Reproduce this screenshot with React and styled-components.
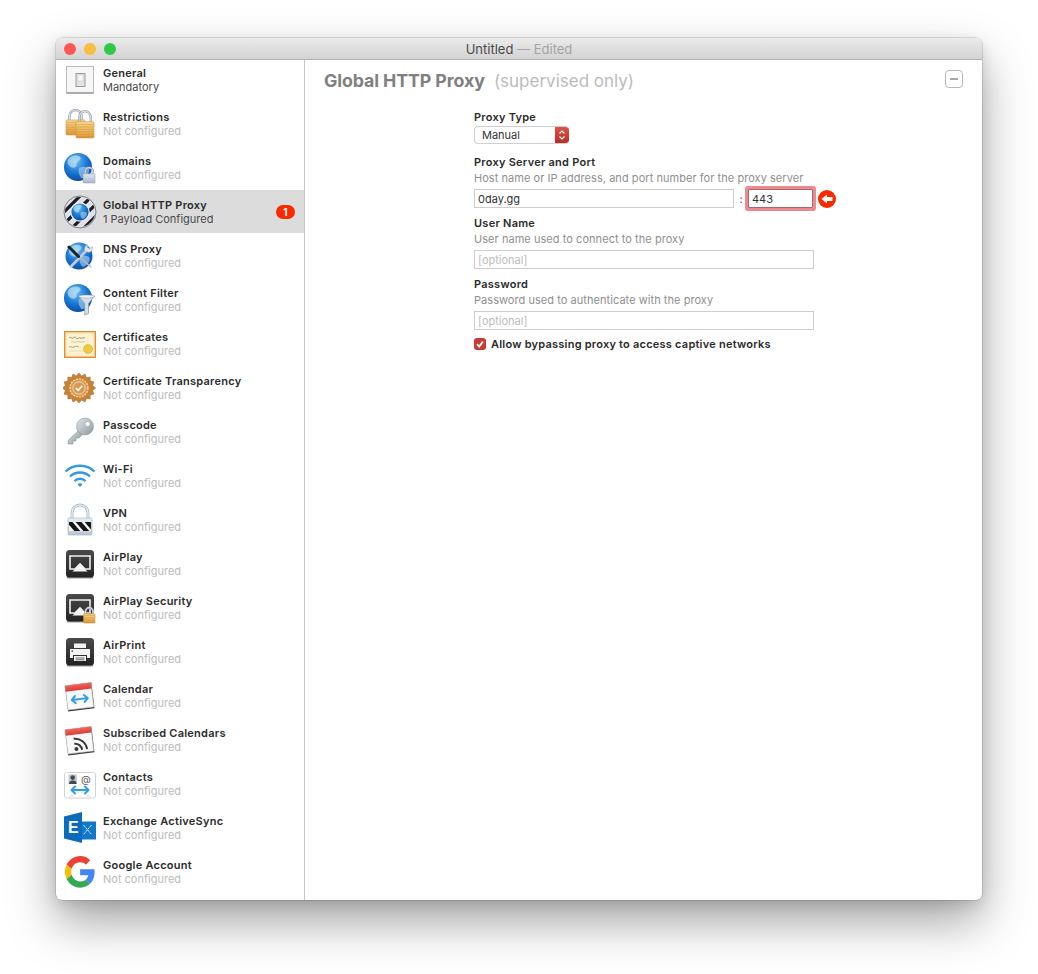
import React from "react";
import styled, { createGlobalStyle } from "styled-components";

const GlobalStyle = createGlobalStyle`
  html, body {
    margin: 0;
    background: #fff;
    font-family: Inter, "Liberation Sans", sans-serif;
  }
`;

const Page = styled.div`
  width: 1038px;
  height: 974px;
  padding: 38px 56px 74px;
  box-sizing: border-box;
  overflow: hidden;
`;

const Window = styled.div`
  height: 862px;
  display: flex;
  flex-direction: column;
  border-radius: 6px;
  background: #fff;
  overflow: hidden;
  box-shadow: 0 0 0 0.5px rgba(0, 0, 0, 0.22), 0 22px 48px rgba(0, 0, 0, 0.36),
    0 4px 14px rgba(0, 0, 0, 0.12);
`;

const TitleBar = styled.div`
  flex: none;
  height: 22px;
  box-sizing: border-box;
  display: flex;
  align-items: center;
  position: relative;
  background: linear-gradient(#ebebeb, #d3d3d3);
  border-bottom: 1px solid #b1b1b1;
`;

const Lights = styled.div`
  display: flex;
  gap: 8px;
  padding-left: 8px;
`;

const Light = styled.span`
  width: 12px;
  height: 12px;
  border-radius: 50%;
  background: ${p => p.color};
`;

const TitleText = styled.div`
  position: absolute;
  left: 0;
  right: 0;
  text-align: center;
  font-size: 13px;
  color: #4b4b4b;

  span {
    color: #a3a3a3;
  }
`;

const Body = styled.div`
  flex: 1;
  display: flex;
  min-height: 0;
`;

const Sidebar = styled.div`
  flex: none;
  width: 248px;
  border-right: 1px solid #c6c6c6;
  overflow: hidden;
`;

const List = styled.div`
  margin-top: -2px;
`;

const Row = styled.div`
  height: 44px;
  box-sizing: border-box;
  display: flex;
  align-items: center;
  gap: 6px;
  padding: 1px 9px 0 7px;
  border-bottom: 1px solid transparent;
  background-clip: padding-box;
  background-color: ${p => (p.selected ? "#dcdcdc" : "transparent")};
`;

const IconBox = styled.svg`
  flex: none;
  width: 34px;
  height: 34px;
  display: block;
`;

const RowText = styled.div`
  flex: 1;
  min-width: 0;
  font-size: 11px;
  line-height: 14px;
`;

const RowName = styled.div`
  font-weight: 600;
  letter-spacing: 0.25px;
  color: #2b2b2b;
`;

const RowSub = styled.div`
  color: ${p => (p.active ? "#4a4a4a" : "#bcbcbc")};
`;

const Badge = styled.div`
  width: 19px;
  height: 14px;
  border-radius: 7px;
  background: #f72a00;
  color: #fff;
  font-size: 10px;
  font-weight: 700;
  line-height: 14px;
  text-align: center;
`;

const Main = styled.div`
  flex: 1;
  min-width: 0;
`;

const Header = styled.div`
  height: 40px;
  display: flex;
  align-items: center;
  justify-content: space-between;
  padding: 0 19px;
`;

const Heading = styled.div`
  font-size: 17.8px;
  font-weight: 700;
  letter-spacing: -0.1px;
  color: #808080;

  span {
    margin-left: 5px;
    font-size: 17px;
    font-weight: 400;
    letter-spacing: 0;
    color: #bbb;
  }
`;

const Collapse = styled.div`
  width: 16px;
  height: 16px;
  margin-top: -3px;
  display: flex;
  align-items: center;
  justify-content: center;
  border: 1px solid #b8b8b8;
  border-radius: 4px;

  &::before {
    content: "";
    width: 8px;
    height: 2px;
    background: #a8a8a8;
  }
`;

const Form = styled.div`
  display: flex;
  flex-direction: column;
  width: 340px;
  margin-left: 169px;
  padding-top: 10px;
`;

const Label = styled.div`
  font-size: 11px;
  line-height: 14px;
  font-weight: 600;
  letter-spacing: 0.25px;
  color: #2b2b2b;
  margin-top: ${p => p.gap || 0}px;
`;

const Help = styled.div`
  font-size: 11px;
  line-height: 14px;
  letter-spacing: 0.05px;
  color: #8f8f8f;
  margin-top: 2px;
  white-space: nowrap;
`;

const SelectBox = styled.div`
  width: 95px;
  height: 18px;
  margin-top: 2px;
  box-sizing: border-box;
  display: flex;
  justify-content: space-between;
  border: 1px solid #cfcfcf;
  border-right: 0;
  border-radius: 4px;
  overflow: hidden;
  font-size: 11px;
  line-height: 16px;
  color: #333;
  padding-left: 7px;
`;

const SelectArrows = styled.div`
  width: 14px;
  margin: -1px 0;
  display: flex;
  align-items: center;
  justify-content: center;
  background: linear-gradient(#e0554c, #b62a22);
`;

const PortRow = styled.div`
  display: flex;
  align-items: center;
  margin-top: 4px;
  white-space: nowrap;
`;

const Colon = styled.div`
  flex: none;
  width: 14px;
  text-align: center;
  font-size: 11px;
  color: #555;
`;

const Input = styled.input`
  display: block;
  flex: none;
  box-sizing: border-box;
  width: ${p => p.$width || "340px"};
  height: 19px;
  margin: ${p => p.$top || 0}px 0 0;
  padding: 0 3px;
  border: 1px solid ${p => (p.$invalid ? "#a9666b" : "#cdcdcd")};
  border-radius: ${p => (p.$invalid ? "1px" : "0")};
  outline: none;
  background: #fff;
  font-family: inherit;
  font-size: 11px;
  color: #333;
  box-shadow: ${p => (p.$invalid ? "0 0 0 3px #ea8b90" : "none")};

  &::placeholder {
    color: #bdbdbd;
    opacity: 1;
  }
`;

const ErrorMark = styled.svg`
  flex: none;
  width: 18px;
  height: 18px;
  margin-left: 5px;
`;

const CheckRow = styled.div`
  display: flex;
  align-items: center;
  gap: 5px;
  margin-top: 7px;
  font-size: 11px;
  line-height: 14px;
  font-weight: 600;
  letter-spacing: 0.23px;
  color: #2b2b2b;
`;

const CheckBox = styled.div`
  width: 12px;
  height: 12px;
  border-radius: 3px;
  background: #c93b36;
  display: flex;
  align-items: center;
  justify-content: center;
`;

// shared bits for the payload icons
const Globe = ({ id, cx, cy, r }) => (
  <g>
    <defs>
      <radialGradient id={id} cx="0.42" cy="0.3" r="0.8">
        <stop offset="0" stopColor="#6fc2f5" />
        <stop offset="0.5" stopColor="#1a78d6" />
        <stop offset="1" stopColor="#073f96" />
      </radialGradient>
    </defs>
    <circle cx={cx} cy={cy} r={r} fill={`url(#${id})`} />
    <path
      d={`M${cx - r * 0.55} ${cy - r * 0.72}c${r * 0.4} ${-r * 0.2} ${r * 0.7} ${-r * 0.1} ${r * 0.75} ${r * 0.1}c${-r * 0.1} ${r * 0.25} ${-r * 0.3} ${r * 0.2} ${-r * 0.3} ${r * 0.45}c${r * 0.05} ${r * 0.25} ${-r * 0.35} ${r * 0.3} ${-r * 0.5} ${r * 0.1}c${-r * 0.2} ${-r * 0.2} ${-r * 0.2} ${-r * 0.45} ${r * 0.05} ${-r * 0.65}z`}
      fill="#d5ecf7"
      opacity="0.6"
    />
    <path
      d={`M${cx + r * 0.1} ${cy + r * 0.05}c${r * 0.35} ${-r * 0.15} ${r * 0.7} ${-r * 0.05} ${r * 0.7} ${r * 0.15}c0 ${r * 0.3} ${-r * 0.3} ${r * 0.6} ${-r * 0.55} ${r * 0.6}c${-r * 0.15} ${-r * 0.2} ${-r * 0.3} ${-r * 0.5} ${-r * 0.15} ${-r * 0.75}z`}
      fill="#bfe2f2"
      opacity="0.55"
    />
  </g>
);

const Padlock = ({ id, x, y, w, h, gold }) => {
  const arch = `M${x + w * 0.18} ${y + h * 0.45}V${y + h * 0.28}a${w * 0.32} ${h * 0.24} 0 0 1 ${w * 0.64} 0V${y + h * 0.45}`;
  const lines = [];
  if (gold) {
    for (let ly = y + h * 0.52; ly < y + h; ly += 2.4) lines.push(ly);
  }
  return (
    <g>
      <defs>
        <linearGradient id={id} x1="0" y1="0" x2="0" y2="1">
          <stop offset="0" stopColor={gold ? "#f8d98c" : "#dfe6f0"} />
          <stop offset="1" stopColor={gold ? "#dd9a3a" : "#a9b7cc"} />
        </linearGradient>
      </defs>
      <path d={arch} fill="none" stroke="#8a93a3" strokeWidth="2.2" />
      <path d={arch} fill="none" stroke="#dfe4ec" strokeWidth="1.1" />
      <rect
        x={x}
        y={y + h * 0.42}
        width={w}
        height={h * 0.58}
        rx="1"
        fill={`url(#${id})`}
        stroke={gold ? "#c58a34" : "#8897ad"}
        strokeWidth="0.5"
      />
      {lines.map(ly => (
        <path key={ly} d={`M${x + 0.5} ${ly}H${x + w - 0.5}`} stroke="#d08f36" strokeWidth="0.5" />
      ))}
    </g>
  );
};

const DarkTile = ({ id }) => (
  <g>
    <defs>
      <linearGradient id={id} x1="0" y1="0" x2="0" y2="1">
        <stop offset="0" stopColor="#4a4a4a" />
        <stop offset="1" stopColor="#222" />
      </linearGradient>
    </defs>
    <rect x="3.5" y="30" width="27" height="1.4" rx="0.7" fill="#9a9a9a" />
    <rect x="3" y="3" width="28" height="27.6" rx="3.5" fill={`url(#${id})`} />
  </g>
);

const AirPlayGlyph = () => (
  <g>
    <path d="M7 9h20v13h-5l-5-5-5 5H7z" fill="none" stroke="#f2f2f2" strokeWidth="1.6" />
    <path d="M17 17l7.5 7.5h-15z" fill="#f2f2f2" />
  </g>
);

const CalendarBase = ({ id, children }) => (
  <g transform="rotate(-7 17 18)">
    <defs>
      <linearGradient id={id} x1="0" y1="0" x2="0" y2="1">
        <stop offset="0" stopColor="#f3655f" />
        <stop offset="1" stopColor="#d93c36" />
      </linearGradient>
    </defs>
    <rect x="3.5" y="5" width="26.5" height="26" fill="#3b3b3b" />
    <rect x="3.5" y="5" width="26" height="24.5" fill="#f8f8f8" stroke="#b5b5b5" strokeWidth="0.5" />
    <rect x="3.5" y="5" width="26" height="6" fill={`url(#${id})`} />
    {children}
  </g>
);

const BlueArrows = ({ x, y, w }) => (
  <g fill="none" stroke="#2d9bef" strokeWidth="2" strokeLinecap="round" strokeLinejoin="round">
    <path d={`M${x + 1} ${y}H${x + w - 1}`} />
    <path d={`M${x + 4} ${y - 3.5}L${x + 0.5} ${y}L${x + 4} ${y + 3.5}`} />
    <path d={`M${x + w - 4} ${y - 3.5}L${x + w - 0.5} ${y}L${x + w - 4} ${y + 3.5}`} />
  </g>
);

const icons = {
  general: (
    <g>
      <rect x="3.5" y="3.5" width="27" height="26.5" fill="#f7f7f7" stroke="#bdbdbd" />
      <path d="M3.5 30h27" stroke="#7d7d7d" />
      <rect x="13" y="10.5" width="9" height="13" fill="#e4e4e4" stroke="#9b9b9b" />
      <rect x="15" y="12" width="5" height="6" fill="#fafafa" stroke="#c4c4c4" strokeWidth="0.5" />
    </g>
  ),
  restrictions: (
    <g>
      <Padlock id="rl1" x={3} y={2} w={19} h={26} gold />
      <Padlock id="rl2" x={13} y={3} w={18} h={28} gold />
    </g>
  ),
  domains: (
    <g>
      <Globe id="g1" cx={15} cy={16} r={14} />
      <Padlock id="dl" x={20} y={16} w={12} h={16} />
    </g>
  ),
  proxy: (
    <g>
      <defs>
        <clipPath id="ringclip">
          <circle cx="17" cy="17" r="15" />
        </clipPath>
      </defs>
      <circle cx="17" cy="17" r="16" fill="#dfe3e8" stroke="#5b6472" strokeWidth="0.8" />
      <g clipPath="url(#ringclip)" stroke="#1b1b1f" strokeWidth="3.2">
        <path d="M-4 10L10 -4M-2 20L20 -2M0 30L30 0M6 36L36 6M16 38L38 16M26 38L38 26" />
      </g>
      <circle cx="17" cy="17" r="9.8" fill="#e8eef5" />
      <Globe id="g2" cx={17} cy={17} r={8.6} />
    </g>
  ),
  dns: (
    <g>
      <Globe id="g3" cx={16} cy={17} r={13.5} />
      <path d="M8 27.5L24 11" stroke="#c9ced6" strokeWidth="2.6" strokeLinecap="round" />
      <path d="M24.5 5.5a5 5 0 0 0-2.5 7l4 1a5 5 0 0 0 3.5-6l-3 2-2-1z" fill="#e2e5ea" stroke="#8b93a0" strokeWidth="0.4" />
      <path d="M15 17l13 11" stroke="#b8bcc4" strokeWidth="1.6" strokeLinecap="round" />
      <path d="M6 8l9.5 9.5" stroke="#222226" strokeWidth="3" strokeLinecap="round" />
    </g>
  ),
  filter: (
    <g>
      <Globe id="g4" cx={15} cy={15} r={14} />
      <path d="M15.5 13h16l-6 7.5v10l-3.8 1.5V20.5z" fill="#d7dee8" stroke="#8494aa" strokeWidth="0.7" strokeLinejoin="round" />
      <ellipse cx="23.5" cy="13.5" rx="7.5" ry="1.6" fill="#f2f5f8" stroke="#8494aa" strokeWidth="0.5" />
    </g>
  ),
  certificates: (
    <g>
      <rect x="1.7" y="4.7" width="30.6" height="25.6" fill="#fdf3d3" stroke="#e08f2e" strokeWidth="1.4" />
      <rect x="3" y="6" width="28" height="23" fill="none" stroke="#f3c67d" strokeWidth="0.5" />
      <path d="M6 11c2-2 2 1 4 0s2-2 3 0 3-1 4 0 3-1 5 0" fill="none" stroke="#85806b" strokeWidth="0.8" />
      <path d="M8 15c2-1 3 1 5 0s3 0 5 0 2-1 4 0" fill="none" stroke="#aaa58e" strokeWidth="0.6" />
      <path d="M6 20c2-1 3 1 5 0s3-1 5 0" fill="none" stroke="#85806b" strokeWidth="0.7" />
      <path d="M6 24h14" stroke="#c8c2a8" strokeWidth="0.5" />
      <circle cx="25" cy="22" r="4.5" fill="#edc93c" stroke="#cda11f" strokeWidth="0.8" strokeDasharray="1.2 0.8" />
    </g>
  ),
  transparency: (
    <g>
      <path
        d="M16 2l2.6 2.9 3.4-1.9 1.3 3.6 3.9-.5 0 3.9 3.8.9-1.4 3.6 3 2.5-3 2.5 1.4 3.6-3.8.9 0 3.9-3.9-.5-1.3 3.6-3.4-1.9L16 32l-2.6-2.9-3.4 1.9-1.3-3.6-3.9.5 0-3.9-3.8-.9 1.4-3.6-3-2.5 3-2.5-1.4-3.6 3.8-.9 0-3.9 3.9.5L10 3l3.4 1.9z"
        fill="#c98136"
        stroke="#a7631f"
        strokeWidth="0.5"
      />
      <circle cx="16" cy="17" r="9" fill="#d89a52" stroke="#f6e6cd" strokeWidth="1.2" strokeDasharray="2 1" />
      <circle cx="16" cy="17" r="6.2" fill="none" stroke="#f6e6cd" strokeWidth="0.8" />
      <path d="M12.8 17l2.4 2.4 4-4.6" fill="none" stroke="#fff" strokeWidth="1.5" />
    </g>
  ),
  passcode: (
    <g>
      <defs>
        <linearGradient id="keyg" x1="0" y1="0" x2="1" y2="1">
          <stop offset="0" stopColor="#e0e6e8" />
          <stop offset="1" stopColor="#8d989c" />
        </linearGradient>
      </defs>
      <path d="M17 14L5 25.5V29h5v-3h3v-3h3l3-3z" fill="url(#keyg)" stroke="#7f898d" strokeWidth="0.5" />
      <circle cx="22" cy="11.5" r="8.5" fill="url(#keyg)" stroke="#7f898d" strokeWidth="0.5" />
      <circle cx="24.5" cy="9" r="2.5" fill="#fff" stroke="#8d989c" strokeWidth="0.5" />
    </g>
  ),
  wifi: (
    <g fill="none" stroke="#2f98e8" strokeWidth="2.4">
      <path d="M2.5 12.5a21 21 0 0 1 29 0" />
      <path d="M7 17.5a14.5 14.5 0 0 1 20 0" />
      <path d="M11.5 22a8 8 0 0 1 11 0" />
      <path d="M14.5 25.5L17 28l2.5-2.5a3.5 3.5 0 0 0-5 0z" fill="#2f98e8" stroke="none" />
    </g>
  ),
  vpn: (
    <g>
      <defs>
        <clipPath id="vpnclip">
          <rect x="6" y="19" width="22" height="9" />
        </clipPath>
        <linearGradient id="vpng" x1="0" y1="0" x2="0" y2="1">
          <stop offset="0" stopColor="#e9eef4" />
          <stop offset="1" stopColor="#bac6d6" />
        </linearGradient>
      </defs>
      <path d="M9 16V10a8 8 0 0 1 16 0v6" fill="none" stroke="#a8b6c8" strokeWidth="2.8" />
      <path d="M9 16V10a8 8 0 0 1 16 0v6" fill="none" stroke="#e3e9f1" strokeWidth="1.4" />
      <rect x="5" y="15" width="24" height="17" rx="1.5" fill="url(#vpng)" stroke="#9fb0c6" strokeWidth="0.6" />
      <rect x="6" y="19" width="22" height="9" fill="#f5f5f5" />
      <g clipPath="url(#vpnclip)" stroke="#161616" strokeWidth="4.4">
        <path d="M4 16l12 14M13 16l12 14M22 16l12 14" />
      </g>
    </g>
  ),
  airplay: (
    <g>
      <DarkTile id="t1" />
      <AirPlayGlyph />
    </g>
  ),
  airplaysec: (
    <g>
      <DarkTile id="t2" />
      <AirPlayGlyph />
      <Padlock id="apl" x={20.5} y={16} w={11.5} h={16} gold />
    </g>
  ),
  airprint: (
    <g>
      <DarkTile id="t3" />
      <path d="M11 13V8.5h12V13z" fill="#f2f2f2" />
      <path d="M7 14h20v9h-3v-3H10v3H7z" fill="#f2f2f2" />
      <rect x="8.5" y="15.5" width="1.6" height="1.2" fill="#333" />
      <path d="M11 21h12v5H11z" fill="#f2f2f2" />
      <path d="M12.5 23h9M12.5 24.8h9" stroke="#333" strokeWidth="0.7" />
    </g>
  ),
  calendar: (
    <CalendarBase id="c1">
      <BlueArrows x={8} y={20} w={17} />
    </CalendarBase>
  ),
  subscribed: (
    <CalendarBase id="c2">
      <g fill="none" stroke="#3a3a3a" strokeWidth="2">
        <path d="M11 15a12 12 0 0 1 12 12" />
        <path d="M11 20a7 7 0 0 1 7 7" />
      </g>
      <circle cx="12.5" cy="25.5" r="2" fill="#3a3a3a" />
    </CalendarBase>
  ),
  contacts: (
    <g>
      <rect x="1.5" y="5.5" width="31" height="25.5" rx="2" fill="#fff" stroke="#cfd3d6" />
      <rect x="5.5" y="7.5" width="8.5" height="9.5" fill="#c3cbd0" />
      <circle cx="9.7" cy="10.6" r="2.3" fill="#43494d" />
      <path d="M6 17c0-2.8 1.7-3.4 3.7-3.4s3.8.6 3.8 3.4z" fill="#43494d" />
      <text x="18" y="16" fontSize="10" fill="#555" fontFamily="Inter, sans-serif">@</text>
      <BlueArrows x={8} y={23} w={18} />
      <path d="M6 30l2-1.5M10 30L8 28.5M24 30l2-1.5M28 30l-2-1.5" stroke="#c9c9c9" strokeWidth="0.6" />
    </g>
  ),
  exchange: (
    <g>
      <path d="M15 10.5h18v18H15z" fill="#1478c8" />
      <path d="M20.5 14l8 9.5M28.5 14l-8 9.5" stroke="#dcecf8" strokeWidth="1" strokeDasharray="2.4 0.8" />
      <path d="M1 5.5L19 1v31L1 27.5z" fill="#0a6cbb" />
      <text x="5" y="21.5" fontSize="16" fontWeight="700" fill="#fff" fontFamily="'Liberation Sans', sans-serif">E</text>
    </g>
  ),
  google: (
    <g transform="translate(2 1) scale(0.63 0.66)">
      <path fill="#EA4335" d="M24 9.5c3.54 0 6.71 1.22 9.21 3.6l6.85-6.85C35.9 2.38 30.47 0 24 0 14.62 0 6.51 5.38 2.56 13.22l7.98 6.19C12.43 13.72 17.74 9.5 24 9.5z" />
      <path fill="#4285F4" d="M46.98 24.55c0-1.57-.15-3.09-.38-4.55H24v9.02h12.94c-.58 2.96-2.26 5.48-4.78 7.18l7.73 6c4.51-4.18 7.09-10.36 7.09-17.65z" />
      <path fill="#FBBC05" d="M10.53 28.59c-.48-1.45-.76-2.99-.76-4.59s.27-3.14.76-4.59l-7.98-6.19C.92 16.46 0 20.12 0 24c0 3.88.92 7.54 2.56 10.78l7.97-6.19z" />
      <path fill="#34A853" d="M24 48c6.48 0 11.93-2.13 15.89-5.81l-7.73-6c-2.15 1.45-4.92 2.3-8.16 2.3-6.26 0-11.57-4.22-13.47-9.91l-7.98 6.19C6.51 42.62 14.62 48 24 48z" />
    </g>
  )
};

const payloads = [
  { name: "General", icon: "general", sub: "Mandatory" },
  { name: "Restrictions", icon: "restrictions" },
  { name: "Domains", icon: "domains" },
  { name: "Global HTTP Proxy", icon: "proxy", sub: "1 Payload Configured", badge: 1, selected: true },
  { name: "DNS Proxy", icon: "dns" },
  { name: "Content Filter", icon: "filter" },
  { name: "Certificates", icon: "certificates" },
  { name: "Certificate Transparency", icon: "transparency" },
  { name: "Passcode", icon: "passcode" },
  { name: "Wi-Fi", icon: "wifi" },
  { name: "VPN", icon: "vpn" },
  { name: "AirPlay", icon: "airplay" },
  { name: "AirPlay Security", icon: "airplaysec" },
  { name: "AirPrint", icon: "airprint" },
  { name: "Calendar", icon: "calendar" },
  { name: "Subscribed Calendars", icon: "subscribed" },
  { name: "Contacts", icon: "contacts" },
  { name: "Exchange ActiveSync", icon: "exchange" },
  { name: "Google Account", icon: "google" }
];

export default function App() {
  return (
    <Page>
      <GlobalStyle />
      <Window>
        <TitleBar>
          <Lights>
            <Light color="#fc5753" />
            <Light color="#fdbc40" />
            <Light color="#33c748" />
          </Lights>
          <TitleText>
            Untitled <span>— Edited</span>
          </TitleText>
        </TitleBar>
        <Body>
          <Sidebar>
            <List>
              {payloads.map(p => (
                <Row key={p.name} selected={p.selected}>
                  <IconBox viewBox="0 0 34 34">{icons[p.icon]}</IconBox>
                  <RowText>
                    <RowName>{p.name}</RowName>
                    <RowSub active={!!p.sub}>{p.sub || "Not configured"}</RowSub>
                  </RowText>
                  {p.badge && <Badge>{p.badge}</Badge>}
                </Row>
              ))}
            </List>
          </Sidebar>
          <Main>
            <Header>
              <Heading>
                Global HTTP Proxy <span>(supervised only)</span>
              </Heading>
              <Collapse />
            </Header>
            <Form>
              <Label>Proxy Type</Label>
              <SelectBox>
                Manual
                <SelectArrows>
                  <svg width="8" height="12" viewBox="0 0 8 12" fill="none" stroke="#fff" strokeWidth="1.2">
                    <path d="M1.5 4.5L4 2l2.5 2.5M1.5 7.5L4 10l2.5-2.5" />
                  </svg>
                </SelectArrows>
              </SelectBox>
              <Label gap={11}>Proxy Server and Port</Label>
              <Help>Host name or IP address, and port number for the proxy server</Help>
              <PortRow>
                <Input $width="260px" defaultValue="0day.gg" />
                <Colon>:</Colon>
                <Input $width="65px" defaultValue="443" $invalid />
                <ErrorMark viewBox="0 0 18 18">
                  <circle cx="9" cy="9" r="9" fill="#f72a00" />
                  <path d="M9 4.5L3.5 9 9 13.5V11h5.5V7H9z" fill="#fff" />
                </ErrorMark>
              </PortRow>
              <Label gap={8}>User Name</Label>
              <Help>User name used to connect to the proxy</Help>
              <Input $top={4} placeholder="[optional]" />
              <Label gap={8}>Password</Label>
              <Help>Password used to authenticate with the proxy</Help>
              <Input $top={4} placeholder="[optional]" />
              <CheckRow>
                <CheckBox>
                  <svg width="10" height="10" viewBox="0 0 10 10" fill="none" stroke="#fff" strokeWidth="1.8">
                    <path d="M2 5.2L4.2 7.5 8 2.5" />
                  </svg>
                </CheckBox>
                Allow bypassing proxy to access captive networks
              </CheckRow>
            </Form>
          </Main>
        </Body>
      </Window>
    </Page>
  );
}
